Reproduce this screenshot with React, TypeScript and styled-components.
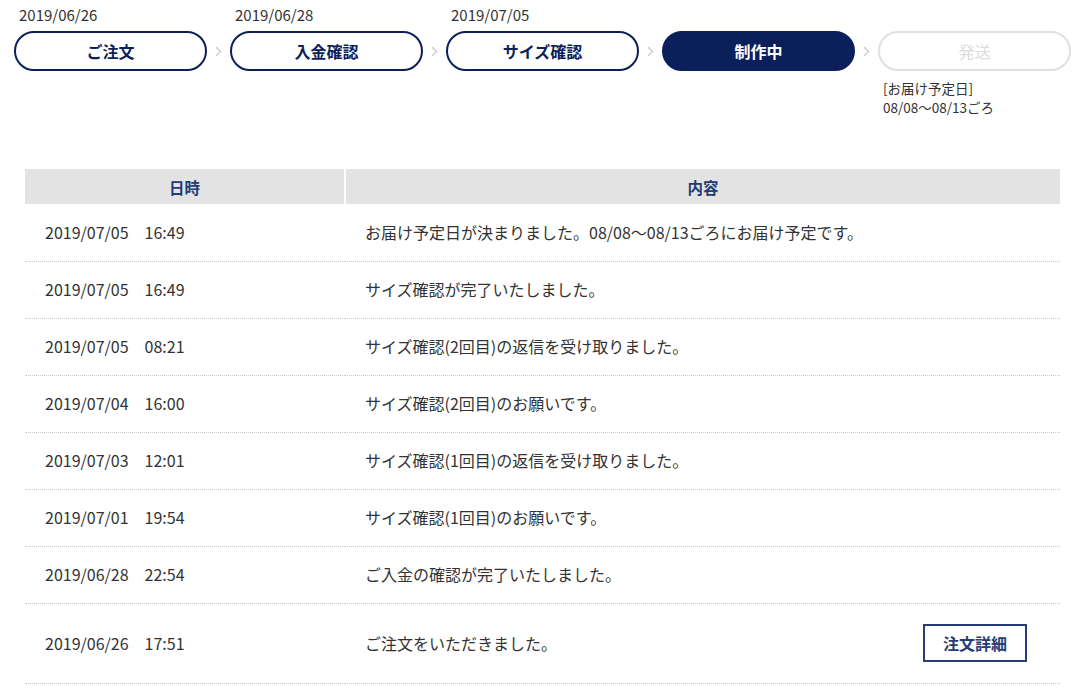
import React from 'react';
import styled, { createGlobalStyle } from 'styled-components';

const navy = '#0b1f5b';
const headNavy = '#233a73';

const GlobalStyle = createGlobalStyle`
  body {
    margin: 0;
    background: #fff;
    font-family: "Noto Sans CJK JP", "Noto Sans", sans-serif;
    color: #333;
  }
`;

const Page = styled.div`
  width: 1086px;
`;

const Steps = styled.div`
  display: flex;
  align-items: flex-start;
  padding: 5px 0 0 14px;
  height: 164px;
  box-sizing: border-box;
`;

const Step = styled.div`
  width: 193px;
  display: flex;
  flex-direction: column;
`;

const StepDate = styled.div`
  height: 20px;
  line-height: 20px;
  font-size: 15px;
  padding-left: 5px;
  color: #333;
`;

const StepButton = styled.div<{ $state: 'done' | 'current' | 'todo' }>`
  margin-top: 6px;
  height: 40px;
  box-sizing: border-box;
  border-radius: 20px;
  border: 2px solid ${(p) => (p.$state === 'todo' ? '#e0e0e0' : navy)};
  background: ${(p) => (p.$state === 'current' ? navy : '#fff')};
  color: ${(p) => (p.$state === 'current' ? '#fff' : p.$state === 'todo' ? '#dcdcdc' : navy)};
  font-weight: ${(p) => (p.$state === 'todo' ? 400 : 700)};
  font-size: 16px;
  display: flex;
  align-items: center;
  justify-content: center;
`;

const Note = styled.div`
  margin-top: 8px;
  padding-left: 5px;
  font-size: 13.5px;
  line-height: 19px;
  color: #333;
`;

const Arrow = styled.div`
  width: 23px;
  height: 40px;
  margin-top: 26px;
  display: flex;
  align-items: center;
  justify-content: center;
`;

const Table = styled.table`
  margin: 5px 26px 0 25px;
  width: 1035px;
  border-collapse: collapse;
  font-size: 16px;
`;

const Th = styled.th<{ $w?: number }>`
  background: #e3e3e3;
  color: ${headNavy};
  font-weight: 700;
  font-size: 15.5px;
  height: 35px;
  padding: 0;
  width: ${(p) => (p.$w ? `${p.$w}px` : 'auto')};
  & + & {
    border-left: 2px solid #fff;
  }
`;

const Tr = styled.tr<{ $tall?: boolean }>`
  height: ${(p) => (p.$tall ? 80 : 57)}px;
  border-bottom: 1px dotted #c8c8c8;
`;

const Td = styled.td`
  padding: 0 0 1px 20px;
  color: #333;
  white-space: nowrap;
`;

const ContentCell = styled.div`
  display: flex;
  align-items: center;
  justify-content: space-between;
  padding-right: 33px;
`;

const DetailButton = styled.button`
  width: 104px;
  height: 38px;
  border: 2px solid #263d75;
  background: #fff;
  color: #263d75;
  font-family: inherit;
  font-weight: 700;
  font-size: 16px;
  cursor: pointer;
`;

const steps: { date?: string; label: string; state: 'done' | 'current' | 'todo' }[] = [
  { date: '2019/06/26', label: 'ご注文', state: 'done' },
  { date: '2019/06/28', label: '入金確認', state: 'done' },
  { date: '2019/07/05', label: 'サイズ確認', state: 'done' },
  { label: '制作中', state: 'current' },
  { label: '発送', state: 'todo' },
];

const history = [
  ['2019/07/05　16:49', 'お届け予定日が決まりました。08/08〜08/13ごろにお届け予定です。'],
  ['2019/07/05　16:49', 'サイズ確認が完了いたしました。'],
  ['2019/07/05　08:21', 'サイズ確認(2回目)の返信を受け取りました。'],
  ['2019/07/04　16:00', 'サイズ確認(2回目)のお願いです。'],
  ['2019/07/03　12:01', 'サイズ確認(1回目)の返信を受け取りました。'],
  ['2019/07/01　19:54', 'サイズ確認(1回目)のお願いです。'],
  ['2019/06/28　22:54', 'ご入金の確認が完了いたしました。'],
  ['2019/06/26　17:51', 'ご注文をいただきました。'],
];

function Chevron() {
  return (
    <svg width="7" height="11" viewBox="0 0 7 11">
      <polyline points="1,1 5.5,5.5 1,10" fill="none" stroke="#cfcfcf" strokeWidth="1.6" />
    </svg>
  );
}

export default function App() {
  return (
    <Page>
      <GlobalStyle />
      <Steps>
        {steps.map((s, i) => (
          <React.Fragment key={s.label}>
            {i > 0 && (
              <Arrow>
                <Chevron />
              </Arrow>
            )}
            <Step>
              <StepDate>{s.date ?? ''}</StepDate>
              <StepButton $state={s.state}>{s.label}</StepButton>
              {s.state === 'todo' && (
                <Note>
                  [お届け予定日]
                  <br />
                  08/08〜08/13ごろ
                </Note>
              )}
            </Step>
          </React.Fragment>
        ))}
      </Steps>
      <Table>
        <thead>
          <tr>
            <Th $w={319}>日時</Th>
            <Th>内容</Th>
          </tr>
        </thead>
        <tbody>
          {history.map(([when, what], i) => {
            const last = i === history.length - 1;
            return (
              <Tr key={i} $tall={last}>
                <Td>{when}</Td>
                <Td>
                  <ContentCell>
                    <span>{what}</span>
                    {last && <DetailButton>注文詳細</DetailButton>}
                  </ContentCell>
                </Td>
              </Tr>
            );
          })}
        </tbody>
      </Table>
    </Page>
  );
}
